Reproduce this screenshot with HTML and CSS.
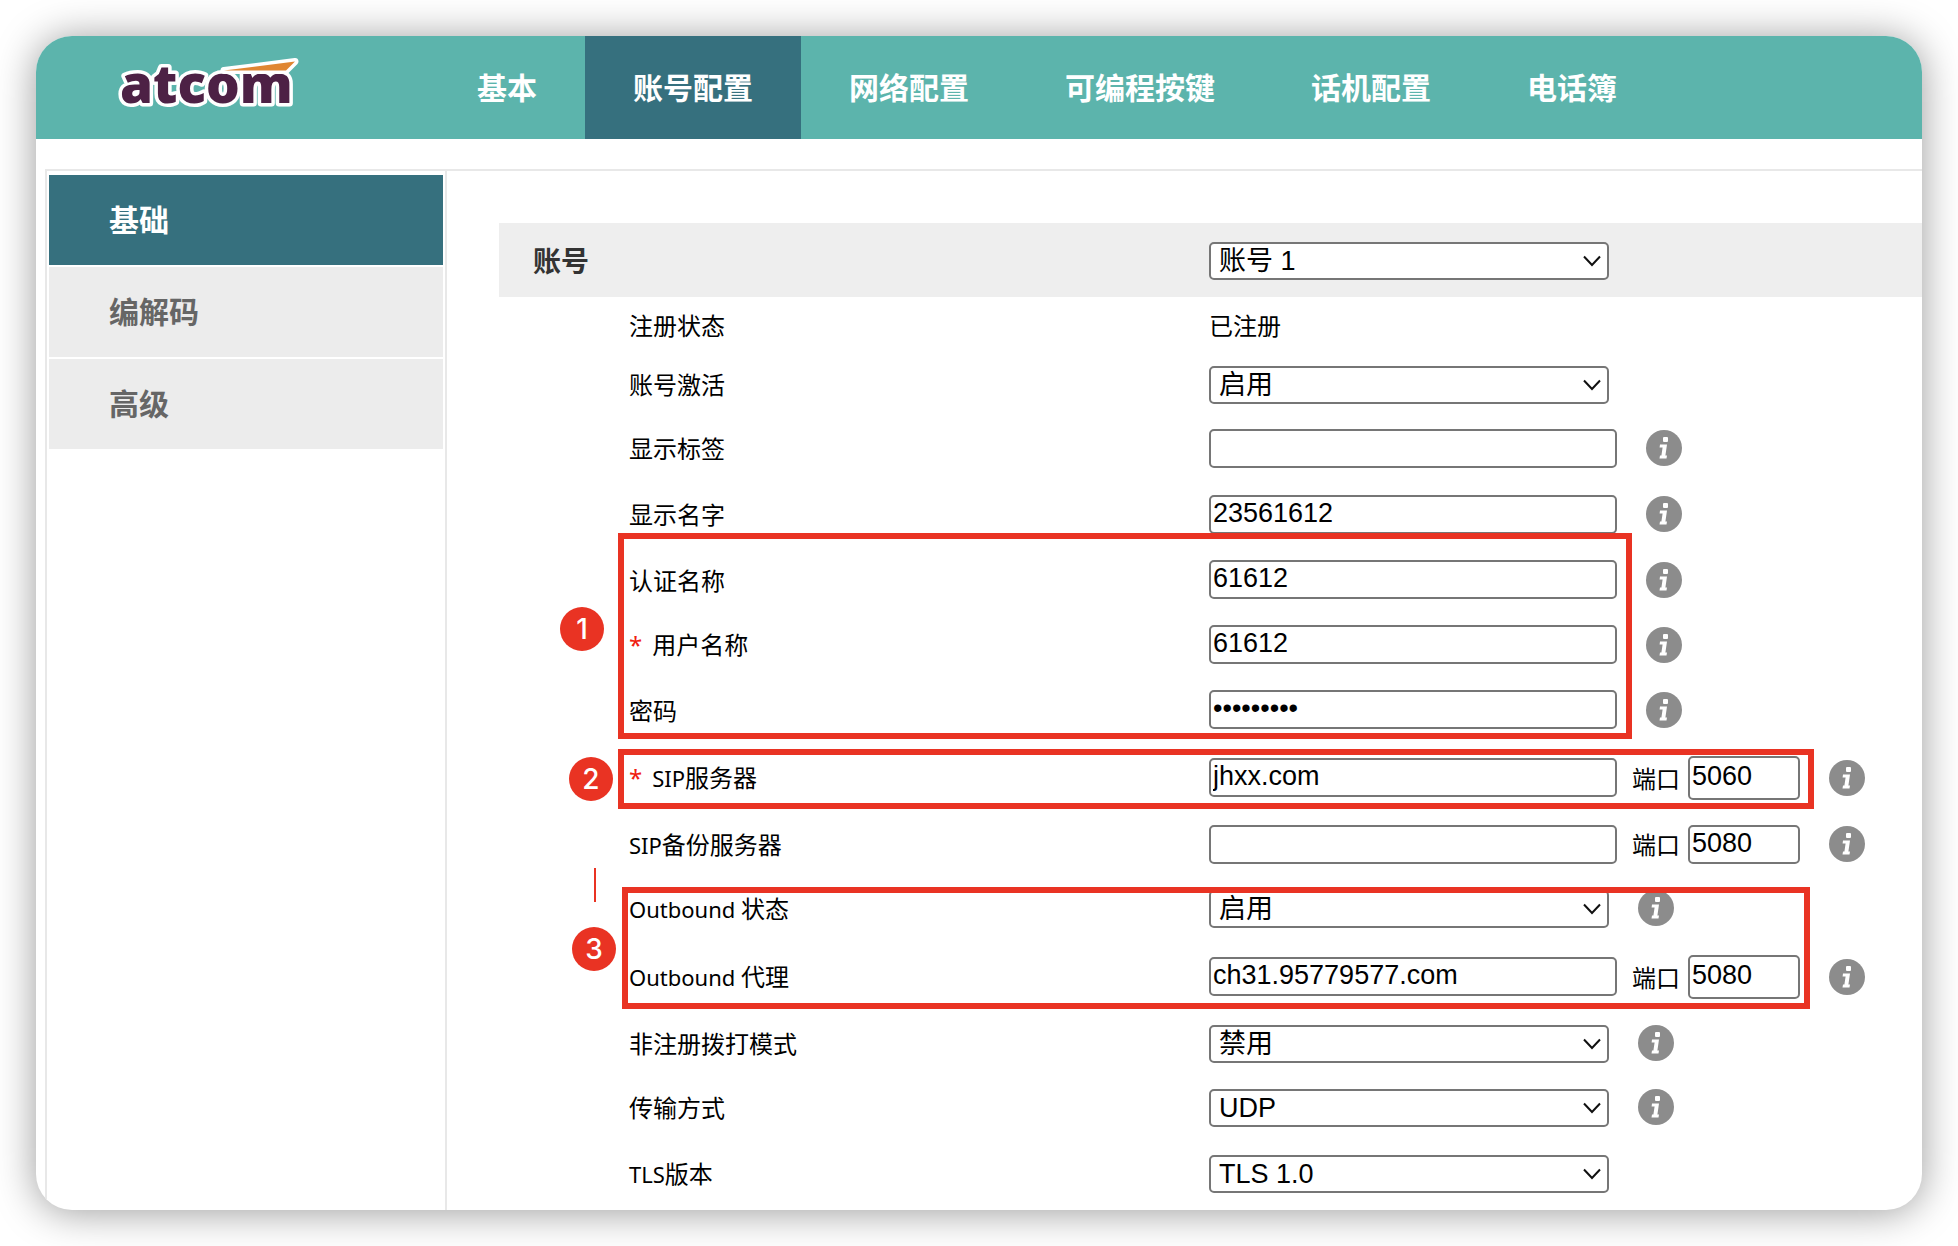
FILE: index.html
```html
<!DOCTYPE html>
<html lang="zh-CN">
<head>
<meta charset="utf-8">
<title>账号配置</title>
<link rel="stylesheet" href="styles.css">
</head>
<body>
<svg width="0" height="0" class="sprite" aria-hidden="true">
  <symbol id="info" viewBox="0 0 36 36">
    <circle cx="18" cy="18" r="18" fill="#8c8c8c"/>
    <rect x="17" y="7" width="5" height="5" rx="1" fill="#fff"/>
    <path d="M14 14.500h7l-1.600 11h1.600l-.5 3h-7l.5-3h1.400l1.200-8h-3z" fill="#fff"/>
  </symbol>
</svg>
<div class="window">
  <header class="topbar">
    <a class="logo" href="#" aria-label="atcom">
      <svg width="200" height="90" viewBox="0 0 200 90">
        <g stroke="#fff" stroke-width="7" stroke-linejoin="round" paint-order="stroke">
          <text x="4" y="57" class="logo-text">atcom</text>
          <path d="M108 24.500L179 15.500L170 24.500Z" fill="#e08632"/>
        </g>
      </svg>
    </a>
    <nav class="tabs">
      <a href="#">基本</a>
      <a href="#" class="active">账号配置</a>
      <a href="#">网络配置</a>
      <a href="#">可编程按键</a>
      <a href="#">话机配置</a>
      <a href="#">电话簿</a>
    </nav>
  </header>
  <div class="content">
    <nav class="sidebar">
      <a href="#" class="active">基础</a>
      <a href="#">编解码</a>
      <a href="#">高级</a>
    </nav>
    <main class="panel">
      <div class="section-head">
        <label for="account">账号</label>
        <select id="account"><option>账号 1</option></select>
      </div>
      <form class="form">
        <div class="row short">
          <span class="label">注册状态</span>
          <span>已注册</span>
        </div>
        <div class="row compact">
          <label for="active">账号激活</label>
          <select id="active"><option>启用</option></select>
        </div>
        <div class="row">
          <label for="tag">显示标签</label>
          <input id="tag" type="text">
          <button type="button" class="info" aria-label="说明"><svg><use href="#info"/></svg></button>
        </div>
        <div class="row">
          <label for="name">显示名字</label>
          <input id="name" type="text" value="23561612">
          <button type="button" class="info" aria-label="说明"><svg><use href="#info"/></svg></button>
        </div>
        <div class="group credentials">
          <div class="row">
            <label for="auth">认证名称</label>
            <input id="auth" type="text" value="61612">
            <button type="button" class="info" aria-label="说明"><svg><use href="#info"/></svg></button>
          </div>
          <div class="row">
            <label for="user"><span class="required">*</span>用户名称</label>
            <input id="user" type="text" value="61612">
            <button type="button" class="info" aria-label="说明"><svg><use href="#info"/></svg></button>
          </div>
          <div class="row">
            <label for="pass">密码</label>
            <input id="pass" type="password" value="123456789">
            <button type="button" class="info" aria-label="说明"><svg><use href="#info"/></svg></button>
          </div>
          <div class="frame"></div>
          <span class="badge">1</span>
        </div>
        <div class="group server">
          <div class="row tall">
            <label for="sip"><span class="required">*</span><span class="latin">SIP</span>服务器</label>
            <input id="sip" type="text" value="jhxx.com">
            <label class="port-label" for="sip-port">端口</label>
            <input id="sip-port" class="port high" type="text" value="5060">
            <button type="button" class="info" aria-label="说明"><svg><use href="#info"/></svg></button>
          </div>
          <div class="frame"></div>
          <span class="badge">2</span>
        </div>
        <div class="row compact">
          <label for="backup"><span class="latin">SIP</span>备份服务器</label>
          <input id="backup" type="text">
          <label class="port-label" for="backup-port">端口</label>
          <input id="backup-port" class="port" type="text" value="5080">
          <button type="button" class="info" aria-label="说明"><svg><use href="#info"/></svg></button>
        </div>
        <div class="group outbound">
          <div class="row">
            <label for="ob-state"><span class="latin">Outbound </span>状态</label>
            <select id="ob-state"><option>启用</option></select>
            <button type="button" class="info" aria-label="说明"><svg><use href="#info"/></svg></button>
          </div>
          <div class="row tall">
            <label for="ob-proxy"><span class="latin">Outbound </span>代理</label>
            <input id="ob-proxy" type="text" value="ch31.95779577.com">
            <label class="port-label" for="ob-port">端口</label>
            <input id="ob-port" class="port high" type="text" value="5080">
            <button type="button" class="info" aria-label="说明"><svg><use href="#info"/></svg></button>
          </div>
          <div class="tick"></div>
          <div class="frame"></div>
          <span class="badge">3</span>
        </div>
        <div class="row compact">
          <label for="dial">非注册拨打模式</label>
          <select id="dial"><option>禁用</option></select>
          <button type="button" class="info" aria-label="说明"><svg><use href="#info"/></svg></button>
        </div>
        <div class="row">
          <label for="transport">传输方式</label>
          <select id="transport"><option>UDP</option></select>
          <button type="button" class="info" aria-label="说明"><svg><use href="#info"/></svg></button>
        </div>
        <div class="row">
          <label for="tls"><span class="latin">TLS</span>版本</label>
          <select id="tls"><option>TLS 1.0</option></select>
        </div>
      </form>
    </main>
  </div>
</div>
</body>
</html>
```
FILE: styles.css
```css
* { box-sizing: border-box; }

body {
  margin: 0;
  padding: 36px;
  background: #fff;
  color: #000;
  font: 24px/32px "Noto Sans CJK SC", sans-serif;
}

a { text-decoration: none; }
.sprite { position: absolute; }

.window {
  border-radius: 36px;
  background: #fff;
  box-shadow: 0 2px 40px rgba(0, 0, 0, .4);
  overflow: hidden;
}

/* top navigation */
.topbar {
  display: flex;
  height: 103px;
  background: #5cb4ac;
}
.logo {
  flex: 0 0 393px;
  padding: 10px 0 0 80px;
}
.logo svg { display: block; }
.logo-text {
  font: 800 53px "Open Sans", sans-serif;
  fill: #4d2145;
}
.tabs { display: flex; }
.tabs a {
  display: flex;
  align-items: center;
  padding: 0 48px 4px;
  color: #fff;
  font-size: 30px;
  font-weight: 700;
}
.tabs .active,
.sidebar .active {
  background: #36707e;
  color: #fff;
}

/* body */
.content {
  display: flex;
  margin: 30px 0 0 9px;
  border-top: 2px solid #e8e8e8;
  border-left: 2px solid #e8e8e8;
}
.sidebar {
  display: flex;
  flex: 0 0 400px;
  flex-direction: column;
  gap: 2px;
  padding: 4px 2px;
  border-right: 2px solid #e8e8e8;
}
.sidebar a {
  display: flex;
  align-items: center;
  height: 90px;
  padding: 0 0 4px 60px;
  background: #ececec;
  color: #666;
  font-size: 30px;
  font-weight: 700;
}
.panel {
  flex: 1;
  min-width: 0;
  padding: 52px 0 4px 52px;
}
.section-head {
  display: flex;
  align-items: center;
  height: 74px;
  padding-left: 34px;
  background: #eee;
}
.section-head label {
  flex: 0 0 676px;
  color: #333;
  font-size: 28px;
  font-weight: 700;
}

/* form rows */
.form { padding-left: 130px; }
.row {
  display: flex;
  align-items: center;
  height: 66px;
}
.row > :first-child { flex: 0 0 580px; }
.row.short { height: 56px; }
.row.compact { height: 62px; }
.row.tall { height: 71px; }
.latin {
  font-family: "Noto Sans", sans-serif;
  font-size: 22px;
  white-space: pre;
}
.required {
  margin-right: 10px;
  color: #f02010;
  font-family: "Noto Sans", sans-serif;
}

input, select {
  width: 408px;
  height: 39px;
  margin: 0;
  padding: 0 2px 2px;
  border: 2px solid #767676;
  border-radius: 5px;
  background: #fff;
  color: #000;
  font: 27px "Liberation Sans", "Noto Sans CJK SC", sans-serif;
}
select {
  width: 400px;
  height: 38px;
  margin-top: 2px;
  padding: 0 8px;
  appearance: none;
  background: #fff url("data:image/svg+xml,%3Csvg xmlns='http://www.w3.org/2000/svg' width='18' height='12'%3E%3Cpath d='M1 1.500L9 10L17 1.500' fill='none' stroke='%23111' stroke-width='2'/%3E%3C/svg%3E") no-repeat right 6px center;
}
.port-label { margin: 0 8px 0 15px; }
.port { width: 112px; }
.port.high { height: 44px; }
.info {
  width: 36px;
  height: 36px;
  margin-left: 29px;
  padding: 0;
  border: 0;
  background: none;
}
.info svg {
  display: block;
  width: 36px;
  height: 36px;
}

/* numbered call-outs over the form */
.group { position: relative; }
.credentials .row { height: 65px; }
.frame {
  position: absolute;
  border: 6px solid #e93323;
  pointer-events: none;
}
.badge {
  position: absolute;
  width: 44px;
  height: 44px;
  border-radius: 50%;
  background: #e93323;
  color: #fff;
  font: 500 28px/44px Inter, sans-serif;
  text-align: center;
}
.tick {
  position: absolute;
  top: -7px;
  left: -35px;
  width: 2px;
  height: 34px;
  background: #e93323;
}
.credentials .frame { inset: -14px auto 3px -11px; width: 1014px; }
.credentials .badge { top: 60px; left: -69px; }
.server .frame { inset: 7px auto 4px -11px; width: 1196px; }
.server .badge { top: 15px; left: -60px; }
.outbound .frame { inset: 12px auto 3px -7px; width: 1188px; }
.outbound .badge { top: 52px; left: -57px; }
```
